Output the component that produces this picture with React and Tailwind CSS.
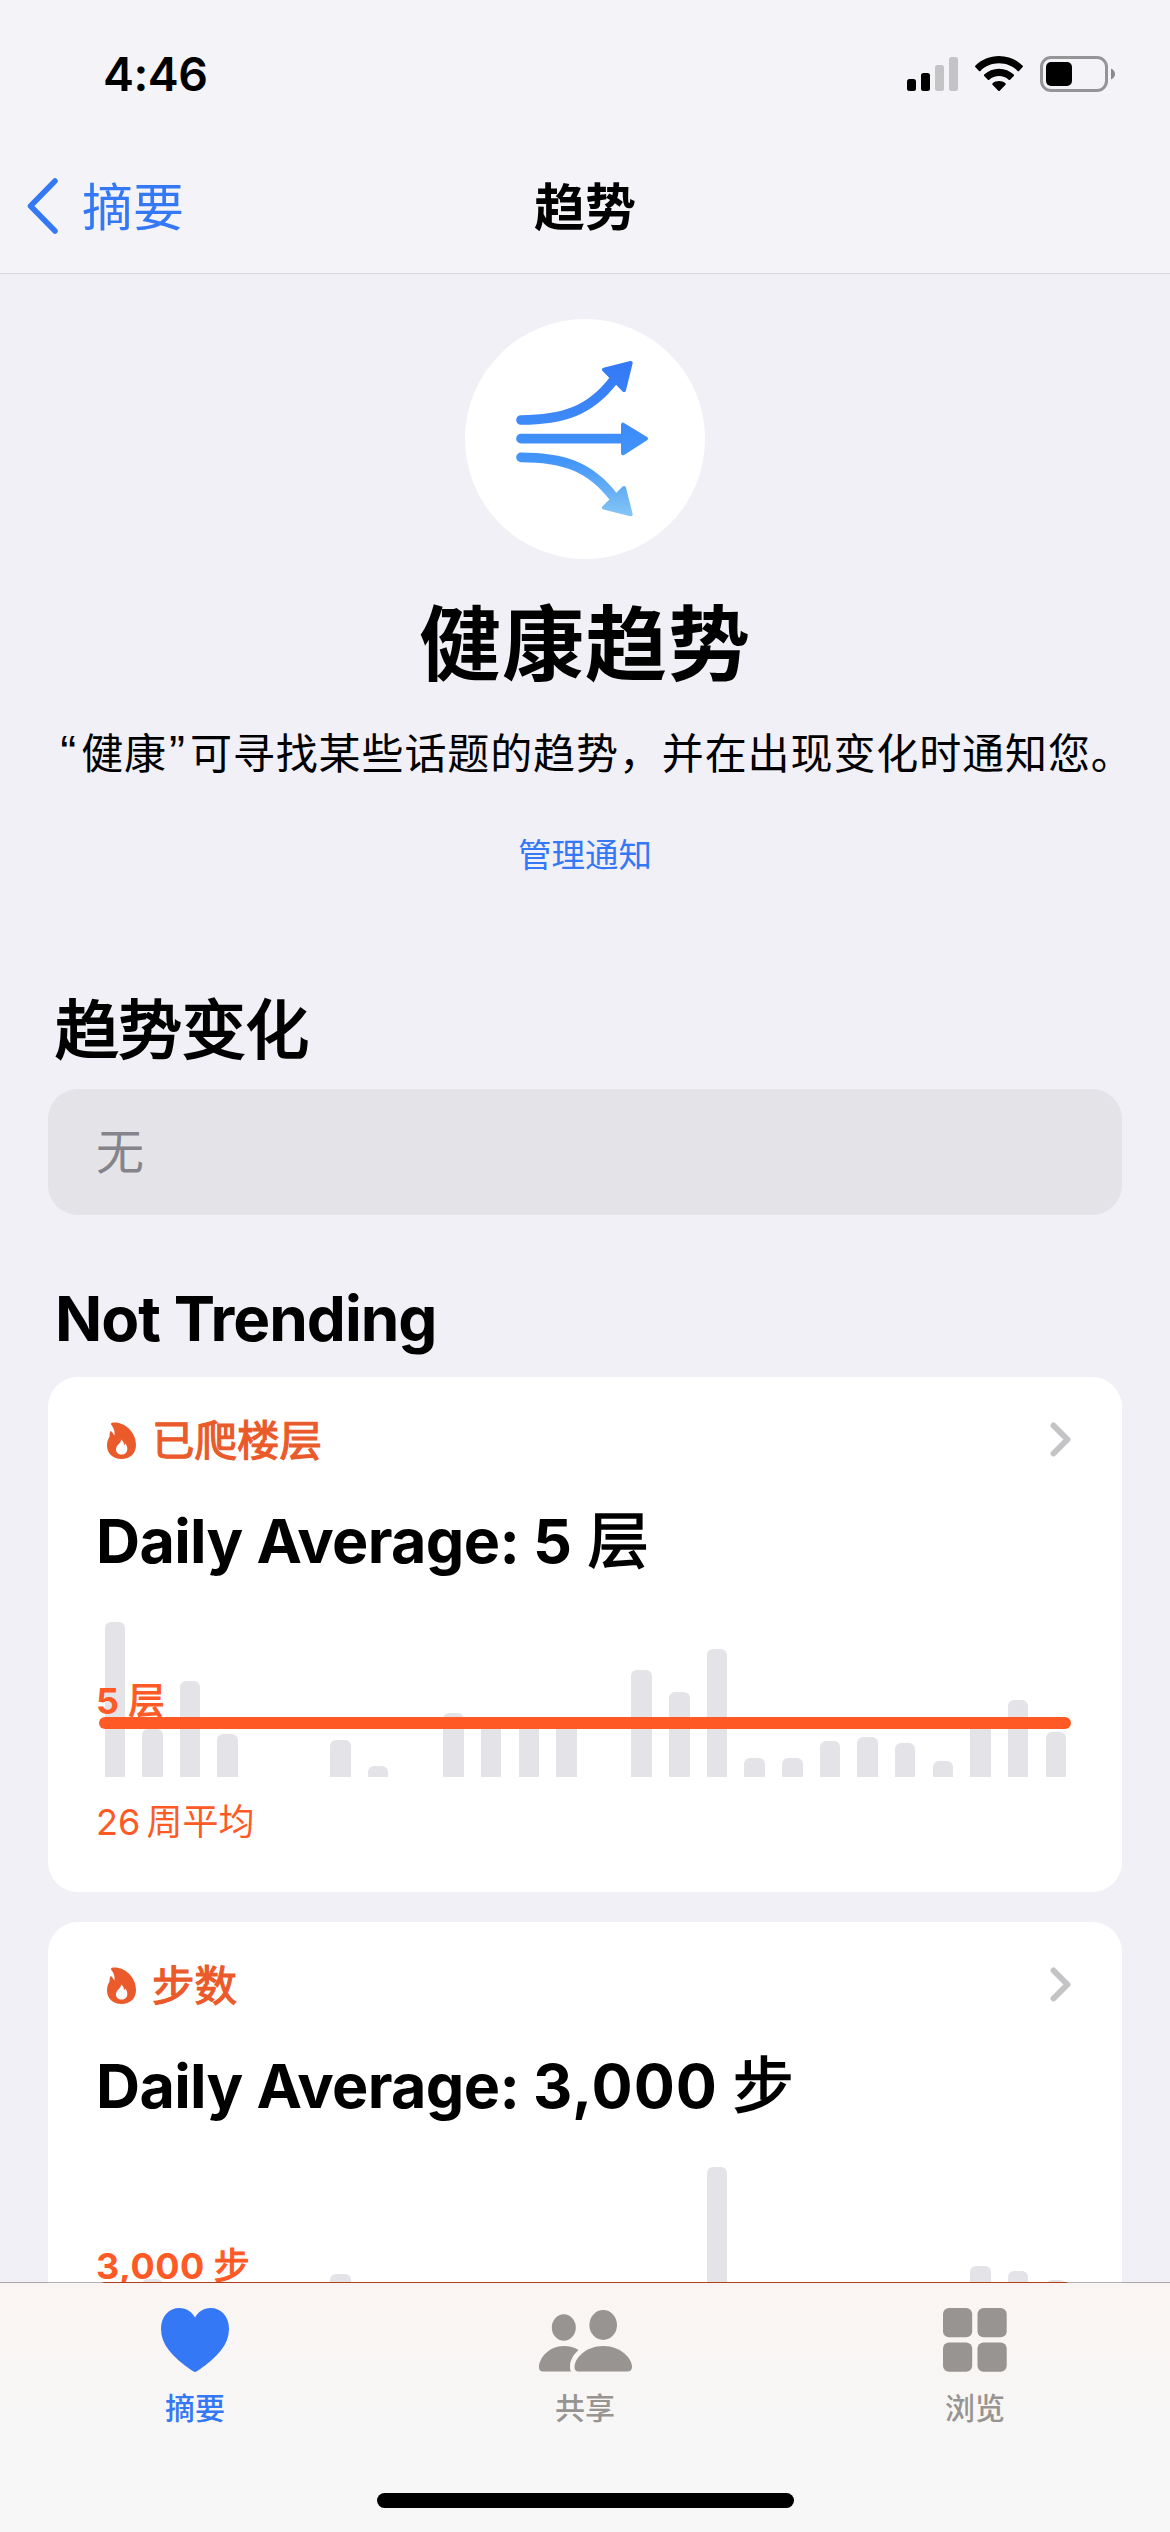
import React from 'react';

const floors = [155, 48, 96, 43, 0, 0, 37, 11, 0, 64, 54, 54, 54, 0, 107, 85, 128, 19, 19, 36, 40, 34, 16, 54, 77, 45];
const steps = [30, 43, 30, 22, 10, 12, 48, 20, 14, 26, 30, 24, 20, 10, 32, 34, 155, 16, 18, 22, 30, 24, 20, 56, 51, 42];

const tabs = [
  { label: '摘要', icon: HeartIcon, active: true },
  { label: '共享', icon: PeopleIcon },
  { label: '浏览', icon: GridIcon },
];

function HeartIcon() {
  return (
    <svg width="68" height="64" viewBox="0 0 68 64" fill="currentColor">
      <path d="M34 64C33 64 31.500 63 30.500 62.300C11 49 0 36 0 21C0 8 8 0 18.500 0C25.500 0 31 4 34 9.500C37 4 42.500 0 49.500 0C60 0 68 8 68 21C68 36 57 49 37.500 62.300C36.500 63 35 64 34 64Z" />
    </svg>
  );
}

function PeopleIcon() {
  return (
    <svg width="93" height="62" viewBox="0 0 93 62" fill="currentColor">
      <ellipse cx="24.800" cy="17.500" rx="12" ry="13.200" />
      <ellipse cx="64.200" cy="15" rx="13.800" ry="15" />
      <path d="M40 61.500C36.500 61.500 35.500 59.500 35.500 57C35.500 49 46 36 64.200 36C82.500 36 93 49 93 57C93 59.500 91.500 61.500 88.500 61.500Z" />
      <path d="M4 61.500C1.500 61.500 0 60 0 57.500C0 48 10 36 24.800 36C30.500 36 35.500 37.500 39.500 40C34 45 31 50.500 31 56.500C31 58.500 31.200 60 32 61.500Z" />
    </svg>
  );
}

function GridIcon() {
  return (
    <svg width="64" height="64" viewBox="0 0 64 64" fill="currentColor">
      <rect x="0" y="0" width="29.200" height="29.200" rx="6" />
      <rect x="34.500" y="0" width="29.200" height="29.200" rx="6" />
      <rect x="0" y="34.500" width="29.200" height="29.200" rx="6" />
      <rect x="34.500" y="34.500" width="29.200" height="29.200" rx="6" />
    </svg>
  );
}

function FlameIcon() {
  return (
    <svg width="29" height="37" viewBox="0 0 29 37" fill="currentColor">
      <path
        fillRule="evenodd"
        d="M5 0.800C16 -1 29 9 29 23C29 31.500 23 37 14.500 37C6 37 0 31.500 0 23.500C0 19.500 1.200 17 2.500 14.500C2.600 12 2.800 10.500 3.300 9.600C3.900 8.800 4.600 9.200 5 10L7.500 13.500C8 9.500 7 6.500 4.300 2.800C3.600 2 4 1 5 0.800ZM14 17.500C14.500 21 9 22.500 9 27.500C9 31 11.500 32.500 14.500 32.500C18 32.500 20.300 30.500 20.300 27C20.300 24.500 19.500 23 18.300 21.500L17 23.500C17 21 16.500 19 14 17.500Z"
      />
    </svg>
  );
}

function TrendIcon() {
  return (
    <svg width="240" height="240" viewBox="0 0 720 720">
      <defs>
        <linearGradient id="trend" gradientUnits="userSpaceOnUse" x1="0" y1="126" x2="0" y2="592">
          <stop offset="0" stopColor="#3478f6" />
          <stop offset="0.500" stopColor="#3f8ff8" />
          <stop offset="0.650" stopColor="#4396f8" />
          <stop offset="1" stopColor="#86c6f4" />
        </linearGradient>
      </defs>
      <g fill="none" stroke="url(#trend)" strokeWidth="29" strokeLinecap="round">
        <path d="M168 303C290 303 375 278 447 182" />
        <path d="M168 359H480V359.100" />
        <path d="M168 415C290 415 375 440 447 536" />
      </g>
      <g fill="url(#trend)" stroke="url(#trend)" strokeWidth="12" strokeLinejoin="round">
        <path d="M497 132L417 152L477 213Z" />
        <path d="M474 317V403L543 359Z" />
        <path d="M497 586L417 566L477 507Z" />
      </g>
    </svg>
  );
}

const StatusBar = () => (
  <div className="flex h-[132px] items-end justify-between pl-[103px] pr-[55px]">
    <div className="mb-[31px] h-[54px] text-[46.5px] font-semibold leading-[54px] tracking-[-0.5px]">4:46</div>
    <div className="mb-[40px] flex h-[37px] items-end">
      <svg width="52" height="35" viewBox="0 0 52 35">
        <rect x="0" y="22" width="9" height="12" rx="2.500" />
        <rect x="14" y="16" width="9" height="18" rx="2.500" />
        <rect x="28" y="8" width="9" height="26" rx="2.500" fill="#c4c4c6" />
        <rect x="42" y="0" width="9" height="34" rx="2.500" fill="#c4c4c6" />
      </svg>
      <svg className="ml-[16px]" width="48" height="36" viewBox="0 0 48 36">
        <path d="M24 0C33 0 41.500 3.500 47.700 9.800C48.100 10.200 48.100 10.700 47.700 11.100L44 14.900C43.600 15.300 43 15.300 42.600 14.900C37.500 10 31 7.300 24 7.300C17 7.300 10.500 10 5.400 14.900C5 15.300 4.400 15.300 4 14.900L0.300 11.100C-0.100 10.700 -0.100 10.200 0.300 9.800C6.500 3.500 15 0 24 0Z" />
        <path d="M24 12.800C29.700 12.800 34.900 15 38.800 18.600C39.200 19 39.200 19.600 38.800 20L35.100 23.700C34.700 24.100 34.100 24.100 33.700 23.700C31 21.400 27.700 20.100 24 20.100C20.300 20.100 17 21.400 14.300 23.700C13.900 24.100 13.300 24.100 12.900 23.700L9.200 20C8.800 19.600 8.800 19 9.200 18.600C13.100 15 18.300 12.800 24 12.800Z" />
        <path d="M24 25C26.500 25 28.700 25.900 30.400 27.300C30.900 27.700 30.900 28.300 30.500 28.700L24.700 34.800C24.300 35.200 23.700 35.200 23.300 34.800L17.500 28.700C17.100 28.300 17.100 27.700 17.600 27.300C19.300 25.900 21.500 25 24 25Z" />
      </svg>
      <svg className="ml-[17px]" width="75" height="36" viewBox="0 0 75 36">
        <rect x="1.500" y="1.500" width="65" height="33" rx="9.500" fill="none" stroke="#959598" strokeWidth="3" />
        <rect x="6" y="6" width="26" height="24" rx="5" />
        <path d="M71 12.500C73.500 13.500 75 15.500 75 18C75 20.500 73.500 22.500 71 23.500Z" fill="#8a8a8d" />
      </svg>
    </div>
  </div>
);

const Header = () => (
  <header className="h-[274px] shrink-0 border-b border-[#dad9de] bg-[#f4f3f8]">
    <StatusBar />
    <div className="grid h-[141px] grid-cols-3 text-[51px] leading-[74px]">
      <button className="flex h-[148px] items-center pl-[27px] text-[#3478f6]">
        <svg width="32" height="56" viewBox="0 0 32 56" fill="none" stroke="currentColor" strokeWidth="5.500" strokeLinecap="round" strokeLinejoin="round">
          <path d="M28 3L3.500 28L28 53" />
        </svg>
        <span className="ml-[23px] mt-[3px]">摘要</span>
      </button>
      <h1 className="flex h-[148px] items-center justify-center pt-[3px] font-bold">趋势</h1>
    </div>
  </header>
);

const TrendCard = ({ title, amount, unit, data, lineBottom, caption }) => (
  <section className="h-[515px] shrink-0 rounded-[30px] bg-white px-[48px] pt-[34px]">
    <div className="flex h-[60px] items-center text-[42.5px] leading-[60px] text-[#ea5a2a]">
      <span className="mb-[2px] ml-[11px]">
        <FlameIcon />
      </span>
      <span className="ml-[16px] [-webkit-text-stroke:1.2px_#ea5a2a]">{title}</span>
      <svg className="mb-[3px] ml-auto mr-[3px]" width="21" height="35" viewBox="0 0 21 35" fill="none" stroke="#c4c4c6" strokeWidth="6" strokeLinecap="round" strokeLinejoin="round">
        <path d="M3.500 3.500L17.500 17.500L3.500 31.500" />
      </svg>
    </div>
    <h3 className="mt-[30px] h-[80px] whitespace-nowrap text-[61px] font-bold leading-[80px] tracking-[-0.65px]">
      Daily Average: <span className="tracking-[1px]">{amount}</span>{' '}
      <span className="ml-[1px] font-normal [-webkit-text-stroke:1.6px_#000]">{unit}</span>
    </h3>
    <div className="relative mt-[41px] h-[155px]">
      <div className="flex h-[155px] items-end gap-[17.15px] pl-[8.5px]">
        {data.map((height, i) => (
          <div key={i} className="w-[20.5px] shrink-0 rounded-t-[6px] bg-[#e4e3e8]" style={{ height }} />
        ))}
      </div>
      <div className="absolute left-[3px] h-[12px] w-[972px] rounded-full bg-[#ff5a25]" style={{ bottom: lineBottom }} />
      <div
        className="absolute left-0 text-[36px] font-bold leading-[40px] tracking-[0.5px] text-[#ff5a25]"
        style={{ bottom: lineBottom + 8 }}
      >
        {amount} <span className="font-normal [-webkit-text-stroke:1.2px_#ff5a25]">{unit}</span>
      </div>
    </div>
    {caption && (
      <div className="mt-[20px] h-[50px] text-[36px] leading-[50px] text-[#ff5a25] [word-spacing:-4px]">{caption}</div>
    )}
  </section>
);

const TabBar = () => (
  <nav className="relative -mt-px h-[250px] shrink-0 border-t border-black/30 bg-linear-to-b from-[#faf5f2] to-[#f7f7f7] to-60% bg-clip-padding">
    <div className="grid h-[209px] grid-cols-3 pt-[25px]">
      {tabs.map(({ label, icon: Icon, active }) => (
        <button
          key={label}
          className={active ? 'flex flex-col items-center text-[#3478f6]' : 'flex flex-col items-center text-[#979491]'}
        >
          <span className="flex h-[64px] items-end">
            <Icon />
          </span>
          <span className="mt-[15px] text-[30px] font-medium leading-[42px]">{label}</span>
        </button>
      ))}
    </div>
    <div className="mx-auto mt-px h-[15px] w-[417px] rounded-full bg-black" />
  </nav>
);

export default function App() {
  return (
    <div
      lang="zh-CN"
      className="flex h-[2532px] w-[1170px] flex-col overflow-hidden bg-[#f1f0f6] font-['Inter','Noto_Sans_CJK_SC',sans-serif] text-black"
    >
      <Header />
      <main className="flex min-h-0 flex-1 flex-col overflow-hidden px-[48px]">
        <div className="flex shrink-0 flex-col items-center pt-[45px]">
          <div className="h-[240px] w-[240px] rounded-full bg-white">
            <TrendIcon />
          </div>
          <h2 className="mt-[26px] h-[120px] text-[82px] font-bold leading-[120px] tracking-[1px]">健康趋势</h2>
          <p className="ml-[24px] mt-[19px] h-[60px] whitespace-nowrap text-[42px] leading-[60px] tracking-[0.9px]">
            <span className="mr-[4px] font-['Liberation_Sans'] text-[48px] leading-none">“</span>健康
            <span className="ml-[2px] mr-[4px] font-['Liberation_Sans'] text-[48px] leading-none">”</span>
            可寻找某些话题的趋势，并在出现变化时通知您。
          </p>
          <button className="mt-[46px] h-[50px] text-[33.5px] leading-[50px] text-[#3478f6]">管理通知</button>
        </div>

        <h2 className="mt-[105px] h-[90px] shrink-0 pl-[7px] text-[63.5px] leading-[90px] [-webkit-text-stroke:2.2px_#000]">
          趋势变化
        </h2>
        <div className="mt-[14px] h-[126px] shrink-0 rounded-[30px] bg-[#e4e3e8] pl-[48px] text-[48px] leading-[126px] text-[#85848a]">
          无
        </div>

        <h2 className="mt-[59px] h-[90px] shrink-0 pl-[7px] text-[62px] font-bold leading-[90px] tracking-[-1px]">Not Trending</h2>
        <div className="mt-[13px] flex shrink-0 flex-col gap-[30px]">
          <TrendCard title="已爬楼层" amount="5" unit="层" data={floors} lineBottom={48} caption="26 周平均" />
          <TrendCard title="步数" amount="3,000" unit="步" data={steps} lineBottom={28} />
        </div>
      </main>
      <TabBar />
    </div>
  );
}
